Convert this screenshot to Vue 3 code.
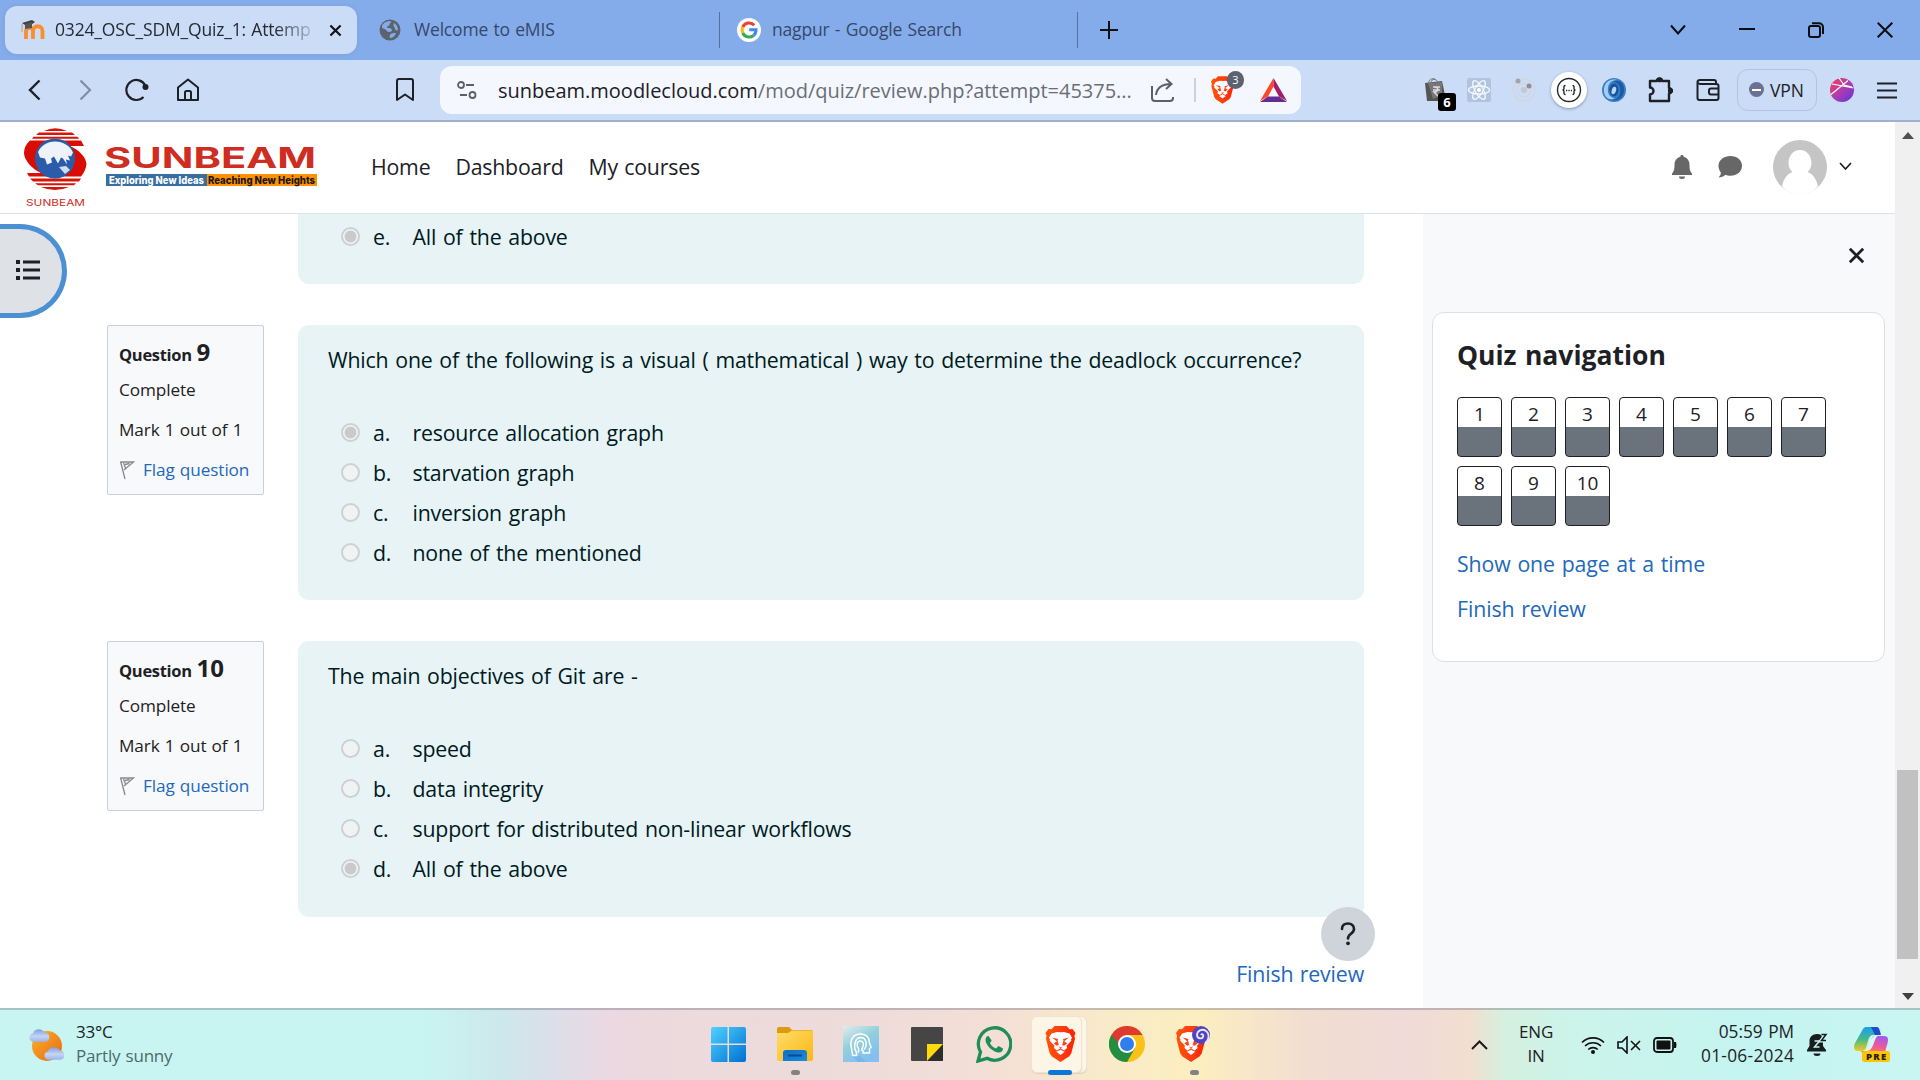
<script setup>
const navLinks = ['Home', 'Dashboard', 'My courses']
const pages = [1, 2, 3, 4, 5, 6, 7, 8, 9, 10]
const questions = [
  {
    number: 9,
    text: 'Which one of the following is a visual ( mathematical ) way to determine the deadlock occurrence?',
    chosen: 0,
    options: ['resource allocation graph', 'starvation graph', 'inversion graph', 'none of the mentioned'],
  },
  {
    number: 10,
    text: 'The main objectives of Git are -',
    chosen: 3,
    options: ['speed', 'data integrity', 'support for distributed non-linear workflows', 'All of the above'],
  },
]
const letters = ['a.', 'b.', 'c.', 'd.', 'e.']
</script>

<template>
  <div class="desktop">
    <!-- shared artwork -->
    <svg class="defs" width="0" height="0" aria-hidden="true">
      <defs>
        <linearGradient id="gLion" x1="0" y1="0" x2="1" y2="0"><stop offset="0" stop-color="#ff5500" /><stop offset=".5" stop-color="#fb3f12" /><stop offset="1" stop-color="#ff2000" /></linearGradient>
        <linearGradient id="gWin" x1="0" y1="0" x2="1" y2="1"><stop offset="0" stop-color="#4fd2ff" /><stop offset="1" stop-color="#0070d2" /></linearGradient>
        <linearGradient id="gFolder" x1="0" y1="0" x2="1" y2="1"><stop offset="0" stop-color="#ffdc6b" /><stop offset="1" stop-color="#fcb713" /></linearGradient>
        <linearGradient id="gPocket" x1="0" y1="0" x2="1" y2="1"><stop offset="0" stop-color="#0d6fc4" /><stop offset="1" stop-color="#1a8ae0" /></linearGradient>
        <linearGradient id="gHead" x1="0" y1="0" x2=".6" y2="1"><stop offset="0" stop-color="#e2ecec" /><stop offset=".5" stop-color="#92cfdb" /><stop offset="1" stop-color="#83bff0" /></linearGradient>
        <linearGradient id="gSun" x1="0" y1="0" x2="1" y2="1"><stop offset="0" stop-color="#f4b62c" /><stop offset="1" stop-color="#ee6412" /></linearGradient>
        <linearGradient id="gCloud" x1="0" y1="0" x2="0" y2="1"><stop offset="0" stop-color="#7f9ee0" /><stop offset=".55" stop-color="#c5d5f4" /><stop offset="1" stop-color="#9bb4ea" /></linearGradient>
        <linearGradient id="gLeo" x1="0" y1="0" x2="1" y2="1"><stop offset="0" stop-color="#fa3f4e" /><stop offset=".5" stop-color="#b23bb0" /><stop offset="1" stop-color="#5a35e0" /></linearGradient>
        <linearGradient id="gCopA" x1="0" y1="0" x2="0" y2="1"><stop offset="0" stop-color="#18a0ee" /><stop offset=".5" stop-color="#44b88c" /><stop offset="1" stop-color="#f0cb1c" /></linearGradient>
        <linearGradient id="gCopB" x1=".6" y1="0" x2=".3" y2="1"><stop offset="0" stop-color="#a45ae8" /><stop offset=".5" stop-color="#ee5a98" /><stop offset="1" stop-color="#ff8a50" /></linearGradient>
        <symbol id="lion" viewBox="0 0 30 36">
          <path fill="url(#gLion)" d="M9 0h12l3 3.300 3-.3 3 4-1.100 3 .6 2.700-3.700 14.500-2 3L15 36l-8.800-5.800-2-3L.5 12.700 1.100 10 0 7l3-4 3 .3z" />
          <path fill="#fff" d="M15 6.300l3.500-.3 5.500 1.500 2.700 4.500-1.200 1 .3 1.700-4.800 5 .6 2.400-3 2.300-2.500-1.500L15 22l-1.100.9-2.500 1.500-3-2.300.6-2.400-4.800-5 .3-1.700-1.200-1L6 7.500 11.500 6z" />
          <path fill="#fb4314" d="M6.500 11.500l6 1.500-.5 1.500 1.300 4.500-1.800.8-3.200-2.300 3-2.200zM23.500 11.500l-6 1.500.5 1.500-1.300 4.500 1.800.8 3.200-2.300-3-2.200zM12.500 20.500l2.500.7 2.500-.7-2.500 1.700z" />
          <path fill="#fff" d="M15 23.700l4.200 2L15 29l-4.200-3.300z" />
        </symbol>
        <symbol id="flag" viewBox="0 0 16 20"><path d="M1.500 1.500l4.500 17.500M1.500 2h13l-9.500 8M4.500 3l2 5M6 4.500l4.500-1" fill="none" stroke="#85898d" stroke-width="1.300" /></symbol>
        <symbol id="cloud" viewBox="0 0 20 13"><path d="M4 13a4 4 0 0 1-.4-7.900A6 6 0 0 1 14.500 4 4.600 4.600 0 0 1 16 13z" fill="url(#gCloud)" /></symbol>
        <symbol id="close" viewBox="0 0 14 14"><path d="M1.500 1.500l11 11M12.500 1.500l-11 11" stroke="currentColor" fill="none" stroke-width="2.300" /></symbol>
      </defs>
    </svg>

    <div class="tabstrip">
      <div class="tab active">
        <svg width="24" height="22" viewBox="0 0 24 22"><path d="M5 20v-8a3.500 3.500 0 0 1 7 0v8M12 20v-8a4.500 4.500 0 0 1 9.500 0v8" fill="none" stroke="#f98f2a" stroke-width="3.800" /><path d="M1 4l10-3 3 2-7 5z" fill="#3f3f41" /><path d="M4 5v5l7-1V3z" fill="#555" /><path d="M1 5v8" stroke="#bda084" /></svg>
        <span class="tabname fade">0324_OSC_SDM_Quiz_1: Attemp</span>
        <svg class="x" width="13" height="13"><use href="#close" /></svg>
      </div>
      <div class="tab second">
        <svg width="22" height="22" viewBox="0 0 22 22"><circle cx="11" cy="11" r="10.500" fill="#5b646e" /><path d="M5 4c3-2 5-2 7-1.500 1 1.500-2 1.500-1.500 3s-2 1-2.500 2.500 3 .5 4.500 2-1 3.500-3 3-2.500-3-5-3.500-1.500-4 .5-5.500zM15 4c2 1 4 4 4 7-1.500 1-3 0-3-1.500S13.500 7 15 4zM11 16c1-2 4-2 6-2-1 3-3 4.500-5.500 5-1-.5-1-2-.5-3z" fill="#85acea" /></svg>
        <span class="tabname">Welcome to eMIS</span>
      </div>
      <div class="tab third">
        <svg width="24" height="24" viewBox="0 0 48 48"><circle cx="24" cy="24" r="24" fill="#fff" /><g fill="none" stroke-width="6"><path d="M34.500 14.500A14 14 0 0 0 11.500 18" stroke="#ea4335" /><path d="M11.500 18a14 14 0 0 0 0 12" stroke="#fbbc05" /><path d="M11.500 30a14 14 0 0 0 21.500 5" stroke="#34a853" /><path d="M33 35a14 14 0 0 0 5-11.500H24.500" stroke="#4285f4" /></g></svg>
        <span class="tabname">nagpur - Google Search</span>
      </div>
      <svg class="plus" width="18" height="18" viewBox="0 0 18 18"><path d="M9 0v18M0 9h18" stroke="#111" stroke-width="2" /></svg>
      <div class="wincontrols">
        <svg width="16" height="12" viewBox="0 0 16 12"><path d="M1 1.500l7 8 7-8" /></svg>
        <svg width="16" height="12" viewBox="0 0 16 12"><path d="M0 5h16" /></svg>
        <svg width="16" height="16" viewBox="0 0 16 16"><rect x="1" y="4" width="11" height="11" rx="2" /><path d="M4 1.200h7a4 4 0 0 1 4 4V12" /></svg>
        <svg width="16" height="16" viewBox="0 0 16 16"><path d="M.7.7l14.600 14.600M15.300.7L.7 15.300" /></svg>
      </div>
    </div>

    <div class="toolbar">
      <div class="navicons">
        <svg width="13" height="22" viewBox="0 0 13 22"><path d="M11.500 1.500L2 11l9.500 9.500" stroke-width="2.400" /></svg>
        <svg class="dim" width="13" height="22" viewBox="0 0 13 22"><path d="M1.500 1.500L11 11l-9.500 9.500" stroke-width="2.200" /></svg>
        <svg width="24" height="24" viewBox="0 0 24 24"><path d="M18.500 19a10 10 0 1 1 1.800-11.500" stroke-width="2.200" /><circle cx="20.500" cy="9" r="3" fill="#1d2026" stroke="none" /></svg>
        <svg width="24" height="24" viewBox="0 0 24 24"><path d="M2 9.500L12 1.500l10 8V22H2z M9 22v-7.500a1.500 1.500 0 0 1 1.500-1.500h3a1.500 1.500 0 0 1 1.500 1.500V22" stroke-width="2" stroke-linejoin="round" /></svg>
      </div>
      <svg class="bookmark" width="18" height="24" viewBox="0 0 18 24"><path d="M1 3a2 2 0 0 1 2-2h12a2 2 0 0 1 2 2v19l-8-5.500L1 22z" fill="none" stroke="#1d2026" stroke-width="2" stroke-linejoin="round" /></svg>
      <div class="urlbar">
        <svg width="20" height="18" viewBox="0 0 20 18" fill="none" stroke="#5c6066" stroke-width="1.800"><circle cx="4" cy="4" r="3" /><path d="M9 4h8M3 14h7" /><circle cx="15.500" cy="14" r="3" /></svg>
        <span class="url">sunbeam.moodlecloud.com<span class="path">/mod/quiz/review.php?attempt=45375...</span></span>
        <svg class="share" width="24" height="24" viewBox="0 0 24 24" fill="none" stroke="#5c6066" stroke-width="2"><path d="M2 8v12a3 3 0 0 0 3 3h15a3 3 0 0 0 3-3v-1M6 17C7 9 12 6 21 6M16 1l5.500 5-5.500 5" /></svg>
        <i class="bar"></i>
        <span class="shield"><svg width="23" height="28"><use href="#lion" /></svg><b>3</b></span>
        <svg class="tri" width="27" height="24" viewBox="0 0 27 24"><path d="M13.500 0L0 23l8-4.500 5.500-10z" fill="#ff4724" /><path d="M13.500 0L27 23l-8-4.500-5.500-10z" fill="#a01f66" /><path d="M0 24h27l-8-5.500H8z" fill="#662d91" /></svg>
      </div>
      <div class="ext">
        <span class="bag"><svg width="22" height="24" viewBox="0 0 22 24"><path d="M1 5l17-2 3 14-5 6H3z" fill="#555" /><path d="M4 5l14-1v13l-9 4z" fill="#777" /><path d="M7 5c0-5 6-5 7 0M4 6c1-5 5-7 8-4" stroke="#777" fill="none" /><path d="M9 9h7M9 12h7M10 9c6 0 4 5 0 5l4 4" stroke="#ddd" fill="none" stroke-width="1.500" /></svg><b>6</b></span>
        <svg width="24" height="24" viewBox="0 0 24 24"><rect width="24" height="24" rx="2" fill="#b0c4e0" /><g fill="none" stroke="#f4f8ff" stroke-width="1.300"><ellipse cx="12" cy="12" rx="10.500" ry="4" /><ellipse cx="12" cy="12" rx="10.500" ry="4" transform="rotate(60 12 12)" /><ellipse cx="12" cy="12" rx="10.500" ry="4" transform="rotate(120 12 12)" /></g><circle cx="12" cy="12" r="2" fill="#fff" /></svg>
        <svg width="24" height="24" viewBox="0 0 24 24"><g fill="none" stroke="#d2d6de" stroke-width="1.300"><circle cx="12" cy="12" r="11" /><circle cx="12" cy="12" r="7" /></g><circle cx="12" cy="12" r="3" fill="#c8c8c8" /><circle cx="6" cy="3" r="2.500" fill="#a3a5a8" /><circle cx="17" cy="8" r="2.500" fill="#8d9096" /></svg>
        <span class="disc"><svg width="26" height="26" viewBox="0 0 26 26" fill="none" stroke="#23282b" stroke-width="1.400"><circle cx="13" cy="13" r="11.500" /><path d="M9.500 8.500c-2 0-1.500 2-1.500 3s-.5 1.500-1.500 1.500c1 0 1.500.5 1.500 1.500s-.5 3 1.500 3M16.500 8.500c2 0 1.500 2 1.500 3s.5 1.500 1.500 1.500c-1 0-1.500.5-1.500 1.500s.5 3-1.500 3" /><path d="M10 13.500h1.300M12.400 13.500h1.300M14.800 13.500h1.300" /></svg></span>
        <svg width="24" height="24" viewBox="0 0 24 24"><circle cx="12" cy="12" r="12" fill="#3a7fc6" /><path d="M2 14C1 6 7 0 15 2 8 2 5 7 6 14c1 4 4 6 7 6C8 23 3 20 2 14z" fill="#a5cdf0" /><path d="M22 10c1 8-5 14-13 12 7 0 10-5 9-12-1-4-4-6-7-6 5-3 10 0 11 6z" fill="#1a5ba8" /><ellipse cx="12" cy="12" rx="4.600" ry="6.500" fill="#17539c" /><ellipse cx="12" cy="12.500" rx="2.200" ry="3.800" fill="#b9d6f3" transform="rotate(15 12 12)" /></svg>
        <svg width="27" height="26" viewBox="0 0 27 26"><path d="M3 4h7a2.500 2.500 0 0 1 5 0h7v7a2.800 2.800 0 0 1 0 5.500V24H3v-6.500a3.500 3.500 0 0 0 0-7z" fill="none" stroke="#1d2026" stroke-width="2.400" stroke-linejoin="round" /><circle cx="12.500" cy="3" r="2.400" fill="#1d2026" /><circle cx="23.500" cy="13.700" r="2.600" fill="#1d2026" /></svg>
        <svg width="24" height="22" viewBox="0 0 24 22"><path d="M20 5H4a3 3 0 0 1-2.500-2c0-1 1-2 2.500-2h14a2 2 0 0 1 2 2v2a2 2 0 0 1 2.500 2v12a2 2 0 0 1-2 2H3.500a2 2 0 0 1-2-2V3M22.500 9.500H15a2 2 0 0 0-2 2v2a2 2 0 0 0 2 2h7.500" fill="none" stroke="#1d2026" stroke-width="2" /></svg>
        <span class="vpn"><i></i>VPN</span>
        <svg width="24" height="24" viewBox="0 0 24 24"><circle cx="12" cy="12" r="12" fill="url(#gLeo)" /><path d="M1 16.500L18 2.500M2 6l21.500 4M9 0l5 7 8 2" stroke="#fff" stroke-width="1.200" fill="none" /></svg>
        <svg width="20" height="17" viewBox="0 0 20 17"><path d="M0 1.500h20M0 8.500h20M0 15.500h20" stroke="#1d2026" stroke-width="2" /></svg>
      </div>
    </div>

    <div class="page">
      <div class="site">
        <header class="sitehead">
          <svg class="logo" width="300" height="88" viewBox="0 0 300 88">
            <path d="M20 9Q31 3.500 43 9zM15 10.500h33l3 2.500H12zM9.500 14.700h44l1.700 2H8z" fill="#d71408" />
            <path d="M6 18.500h51l3 5.500H46c9 4 16 11 16.500 18C62 47 60 51 57 54.500H5L3 51h14C8 47 0 38 0 31c0-5 2-9 6-12.500z" fill="#d90d04" />
            <path d="M6 56.500h51l-2 3H9zM11 61.200h41l-2 2H14zM17 65h28Q31 71 17 65z" fill="#d71408" />
            <circle cx="31" cy="36.500" r="20" fill="#2a5cab" />
            <path d="M14 30c3-6 9-10.500 17-10.500 8 0 15 4 18 11l-2 4-3-1 2 5-4-1 1 5-4-6-2-1-3 6-4-7-3 2 1 4-5 2-2-6-5-1z" fill="#eef3fa" />
            <path d="M35 45l7-1 4 4-5 4z" fill="#d0dff0" />
            <text x="2" y="83.500" font-size="9.500" class="lname thin" textLength="59" lengthAdjust="spacingAndGlyphs">SUNBEAM</text>
            <text x="80" y="45.500" font-size="28" class="lname" textLength="212" lengthAdjust="spacingAndGlyphs">SUNBEAM</text>
            <rect x="82" y="52" width="101" height="12" fill="#376d9f" /><rect x="183" y="52" width="110" height="12" fill="#fb9106" />
            <text x="85" y="61.500" font-size="10.500" class="ltag" fill="#fff" textLength="95" lengthAdjust="spacingAndGlyphs">Exploring New Ideas</text>
            <text x="184" y="61.500" font-size="10.500" class="ltag" fill="#21160a" textLength="107" lengthAdjust="spacingAndGlyphs">Reaching New Heights</text>
          </svg>
          <nav class="links"><a v-for="l in navLinks" :key="l">{{ l }}</a></nav>
          <div class="user">
            <svg width="22" height="24" viewBox="0 0 22 24" fill="#676767"><path d="M11 0a1.500 1.500 0 0 1 1.500 1.800C17 3 18.500 6.500 18.500 10c0 5 1 7 2.500 8.500V20H1v-1.500C2.500 17 3.500 15 3.500 10 3.500 6.500 5 3 9.500 1.800A1.500 1.500 0 0 1 11 0zM8 21.500h6a3 2.500 0 0 1-6 0z" /></svg>
            <svg width="24" height="22" viewBox="0 0 24 22" fill="#676767"><path d="M12.500 0C19 0 24 4 24 9.700s-5 10-11.500 10c-2 0-3.500-.3-5-1C5.500 20.500 3 21.500.500 21.500c1.500-1.500 2.500-3 2.300-5C1.300 14.500.5 12 .5 9.700.5 4 6 0 12.500 0z" /></svg>
            <svg class="avatar" width="54" height="54" viewBox="0 0 54 54"><circle cx="27" cy="27" r="27" fill="#c5c5c5" /><path d="M15.500 23c0-7 4.500-13 11.500-13s11.500 6 11.500 13c0 4-1.500 7-4 9 6 2 9 8 10.500 14-8 11-28 11-36 0 1.500-6 4.500-12 10.500-14-2.500-2-4-5-4-9z" fill="#fff" /></svg>
            <svg width="13" height="9" viewBox="0 0 13 9"><path d="M1 1l5.500 6L12 1" stroke="#1d2125" stroke-width="1.700" fill="none" /></svg>
          </div>
        </header>

        <div class="columns">
          <div class="indexbtn"><svg width="24" height="20" viewBox="0 0 24 20" fill="#1d2125"><path d="M0 0h4v4H0zM0 8h4v4H0zM0 16h4v4H0zM7 .5h17v3H7zM7 8.500h17v3H7zM7 16.500h17v3H7z" /></svg></div>
          <main class="quiz">
            <div class="question tail">
              <div class="card">
                <div class="option"><i class="radio on"></i><span class="letter">{{ letters[4] }}</span><span>All of the above</span></div>
              </div>
            </div>
            <div v-for="q in questions" :key="q.number" class="question">
              <aside class="info">
                <p class="qno">Question <b>{{ q.number }}</b></p>
                <p>Complete</p>
                <p>Mark 1 out of 1</p>
                <p class="flag"><svg width="16" height="20"><use href="#flag" /></svg><a>Flag question</a></p>
              </aside>
              <div class="card">
                <p class="qtext">{{ q.text }}</p>
                <div v-for="(o, i) in q.options" :key="o" class="option">
                  <i class="radio" :class="{ on: i === q.chosen }"></i><span class="letter">{{ letters[i] }}</span><span>{{ o }}</span>
                </div>
              </div>
            </div>
            <div class="finish"><a>Finish review</a></div>
            <div class="help"><svg width="16" height="24" viewBox="0 0 16 24"><path d="M2 7c0-4 2.500-5.500 6-5.500s6 2 6 5.500c0 5-6 4.500-6 9.500" fill="none" stroke="#1d2125" stroke-width="2.600" stroke-linecap="round" /><circle cx="8" cy="21.300" r="1.900" fill="#1d2125" /></svg></div>
          </main>
          <section class="drawer">
            <svg class="shut" width="17" height="17"><use href="#close" /></svg>
            <div class="block">
              <h2>Quiz navigation</h2>
              <div class="pages"><span v-for="p in pages" :key="p">{{ p }}</span></div>
              <a>Show one page at a time</a>
              <a>Finish review</a>
            </div>
          </section>
        </div>
      </div>
      <div class="scrollbar">
        <i class="up"></i><i class="thumb"></i><i class="down"></i>
      </div>
    </div>

    <footer class="taskbar">
      <div class="weather">
        <svg width="36" height="34" viewBox="0 0 36 34"><circle cx="18" cy="18" r="15" fill="url(#gSun)" /><use href="#cloud" x="0" y="0" width="21" height="14" /><use href="#cloud" x="15" y="18" width="21" height="14" /></svg>
        <div><span>33°C</span><span class="sub">Partly sunny</span></div>
      </div>
      <div class="apps">
        <span class="app"><svg width="35" height="35" viewBox="0 0 35 35"><path d="M0 2a2 2 0 0 1 2-2h14.500v16.500H0zM18 0h15a2 2 0 0 1 2 2v14.500H18zM0 18h16.500v17H2a2 2 0 0 1-2-2zM18 18h17v15a2 2 0 0 1-2 2H18z" fill="url(#gWin)" /></svg></span>
        <span class="app"><svg width="36" height="34" viewBox="0 0 36 34"><path d="M0 2a2 2 0 0 1 2-2h10l3 3h19a2 2 0 0 1 2 2v6H0z" fill="#dc9b0c" /><path d="M0 6h11l4-2.500h21V32a2 2 0 0 1-2 2H2a2 2 0 0 1-2-2z" fill="url(#gFolder)" /><path d="M6 34v-8a3 3 0 0 1 3-3h18a3 3 0 0 1 3 3v8z" fill="url(#gPocket)" /><path d="M11 28.500h14" stroke="#0a4a90" stroke-width="2" /></svg><i class="dot"></i></span>
        <span class="app"><svg width="36" height="36" viewBox="0 0 36 36"><rect width="36" height="36" fill="url(#gHead)" /><path d="M9 30h8l6 6H15z" fill="#6faeea" opacity=".6" /><g fill="none" stroke="#fff" stroke-width="1.500"><path d="M9.500 29.500h4v-3.500M9.500 29.500V28l-1.500-8c-1-7 3-12 9-12 6.500 0 9.500 4 9.500 9l1.500 4.500-1.500 1V27h-6.500v-3" /><path d="M13.500 26c-3-3.500-2.500-14 4-14.500 6.500 0 7 8.500 3.500 12M15.500 26.500v-4c-2.500-3-1.500-7.500 1.800-7.500s4.200 4.500 1.700 7.500v2.500" /></g></svg></span>
        <span class="app"><svg width="32" height="34" viewBox="0 0 32 34"><rect width="32" height="34" rx="1" fill="#454545" /><path d="M16 34V17h16z" fill="#2d2d2d" /><path d="M32 17v16a1 1 0 0 1-1 1H16z" fill="#2d2d2d" /><path d="M16 34V17h16z" fill="#ffd90b" /></svg></span>
        <span class="app"><svg width="36" height="38" viewBox="0 0 36 38"><path d="M2 36l2.500-9A16.200 16.200 0 1 1 11 33.300z" fill="none" stroke="#1e8d5a" stroke-width="3.300" /><path d="M12.500 11c-2 0-3 2-3 4 0 5 7.500 12.500 13.500 12.500 2 0 4-1.500 4-4l-4.500-2.500-2.500 2.500c-3-1-5-3-6-5.500l1.700-2.500z" fill="#1e8d5a" /></svg></span>
        <span class="app"><span class="tile back"></span><span class="tile"></span><svg class="front" width="31" height="36"><use href="#lion" /></svg><i class="dot blue"></i></span>
        <span class="app"><svg width="36" height="36" viewBox="0 0 36 36"><circle cx="18" cy="18" r="18" fill="#fbc116" /><path d="M2.400 9A18 18 0 0 1 33.600 9H18z" fill="#de3b2e" /><path d="M2.400 9A18 18 0 0 0 18 36l7.800-13.500L18 18z" fill="#218e41" /><path d="M2.400 9L10.200 22.500 18 18V9z" fill="#de3b2e" /><path d="M2.400 9l7.800 13.500L18 27z" fill="#218e41" /><circle cx="18" cy="18" r="9" fill="#fff" /><circle cx="18" cy="18" r="7" fill="#2f7dee" /></svg></span>
        <span class="app"><svg class="lion2" width="36" height="36" viewBox="0 0 36 36"><use href="#lion" width="30" height="36" /><circle cx="25" cy="9" r="9" fill="#5145bf" /><path d="M25 9c1-2 3 0 2 2s-6 2-6-2 5-7 9-4 3 10-1 12" fill="none" stroke="#e9e5ff" stroke-width="1.800" /></svg><i class="dot"></i></span>
      </div>
      <div class="tray">
        <svg class="chev" width="17" height="10" viewBox="0 0 17 10"><path d="M1 9l7.500-7.500L16 9" fill="none" stroke="#1b1b1b" stroke-width="2" /></svg>
        <span class="lang">ENG<br />IN</span>
        <svg class="wifi" width="24" height="18" viewBox="0 0 24 18"><g fill="none" stroke="#111" stroke-width="1.600"><path d="M1 6.500a15.500 15.500 0 0 1 22 0M4 10a11.500 11.500 0 0 1 16 0M7.200 13.500a7 7 0 0 1 9.600 0" /></g><circle cx="12" cy="16" r="2" fill="#111" /></svg>
        <svg class="spk" width="24" height="18" viewBox="0 0 24 18"><path d="M1 6h4l5-5v16l-5-5H1zM14 5l9 9M23 5l-9 9" fill="none" stroke="#111" stroke-width="1.600" /></svg>
        <svg class="bat" width="24" height="16" viewBox="0 0 24 16"><rect x="1" y="1" width="19" height="14" rx="3" fill="none" stroke="#111" stroke-width="1.800" /><rect x="3.500" y="3.500" width="14" height="9" rx="1" fill="#111" /><path d="M21 5h2q1 3 0 6h-2z" fill="#111" /></svg>
        <span class="clock">05:59 PM<br /><span class="date">01-06-2024</span></span>
        <svg class="bell" width="22" height="24" viewBox="0 0 22 24"><path d="M10 1c3 0 5 1 6 3v9l3 4v1.500H0V17l2.500-4V8c0-4 3-7 7.500-7zM6.500 20.500h7a3.500 2.500 0 0 1-7 0z" fill="#181d1d" /><path d="M7.500 8h5l-5 6h5" stroke="#c6f5f2" stroke-width="1.500" fill="none" /><path d="M14.500 1.500H19l-4.500 6H19" stroke="#c6f5f2" stroke-width="4" fill="none" /><path d="M14.500 1.500H19l-4.500 6H19" stroke="#181d1d" stroke-width="1.500" fill="none" /></svg>
        <svg class="copilot" width="36" height="36" viewBox="0 0 36 36"><path d="M9 2c1-1.500 2-2 4-2h9c2 0 3 2 4 8h-7c-3 0-4 3-5 6l-2 7c-1 2-2 3-4 3H4c-4 0-5-3-3-8z" fill="url(#gCopA)" /><path d="M17 0h6c2 0 3 4 4 8h-6z" fill="#1c49cf" /><path d="M21 9h9c4 0 5 3 3 9l-2 7c-1 2-3 3-5 3H12c-3 0-4-2-5-4h4c3 0 4-3 5-7 1-3 2-8 5-8z" fill="url(#gCopB)" /><path d="M21 9h3c-4 1-4 15-11 15h-3c6-1 5-14 11-15z" fill="#ddf4f0" /><rect x="8" y="24" width="28" height="11" rx="2.500" fill="#fbc404" /><text x="12" y="33" font-size="9.500" class="pre" textLength="20">PRE</text></svg>
      </div>
    </footer>
  </div>
</template>

<style>
body { margin: 0; overflow: hidden; }
</style>

<style scoped>
.desktop { width: 1920px; height: 1080px; display: flex; flex-direction: column; overflow: hidden; font-family: "Open Sans", "Noto Sans", sans-serif; color: #1d2125; background: #fff; }
.desktop svg { display: block; flex: none; }
.defs { position: absolute; }
p, h2 { margin: 0; }
i { font-style: normal; }
a { color: #2268bb; }

.tabstrip { flex: none; height: 60px; display: flex; align-items: center; background: #85acea; box-sizing: border-box; padding-left: 5px; }
.tab { display: flex; align-items: center; box-sizing: border-box; height: 36px; font-size: 17.500px; letter-spacing: -.18px; word-spacing: 1px; white-space: nowrap; color: #35486b; }
.tabname { margin-bottom: 2px; }
.tab.active { width: 352px; height: 48px; padding-left: 16px; border-radius: 12px; background: #cbdcf6; color: #262b33; box-shadow: 0 0 4px rgba(60, 90, 150, .15); }
.tab.active .tabname { margin-left: 10px; width: 256px; }
.fade { -webkit-mask-image: linear-gradient(90deg, #000 86%, rgba(0, 0, 0, .2)); }
.tab.active .x { margin-left: 18px; color: #111; }
.tab.second { width: 363px; padding-left: 22px; border-right: 1px solid #57719f; }
.tab.second .tabname { margin-left: 13px; }
.tab.third { width: 358px; padding-left: 17px; border-right: 1px solid #57719f; }
.tab.third .tabname { margin-left: 11px; }
.plus { margin-left: 22px; }
.wincontrols { margin-left: auto; margin-right: 27px; display: flex; align-items: center; gap: 53px; }
.wincontrols svg { fill: none; stroke: #0b0d12; stroke-width: 2; }

.toolbar { flex: none; height: 62px; box-sizing: border-box; border-bottom: 2px solid #a0b1cc; background: #cbdcf6; display: flex; align-items: center; }
.navicons { display: flex; align-items: center; margin-left: 28px; }
.navicons svg { fill: none; stroke: #1d2026; }
.navicons svg:nth-child(2) { margin-left: 38px; }
.navicons svg:nth-child(3) { margin-left: 33px; }
.navicons svg:nth-child(4) { margin-left: 27px; }
.navicons .dim { stroke: #7f8da8; }
.bookmark { margin-left: 196px; }
.urlbar { margin-left: 26px; width: 861px; height: 48px; box-sizing: border-box; padding-left: 17px; border-radius: 12px; background: #f4f7fd; display: flex; align-items: center; }
.url { margin-left: 21px; width: 634px; font-size: 20px; letter-spacing: -.01px; color: #1d2026; white-space: nowrap; }
.path { color: #6a6e76; }
.share { margin-left: 18px; }
.bar { margin-left: 20px; width: 2px; height: 24px; background: #cdd1d8; }
.shield { position: relative; margin-left: 15px; }
.shield b { position: absolute; left: 16px; top: -5px; width: 17px; height: 18px; border-radius: 9px; background: #5d6270; color: #fff; font-size: 11px; font-weight: 400; line-height: 18px; text-align: center; }
.tri { margin-left: 26px; }
.ext { display: flex; align-items: center; margin-left: auto; margin-right: 23px; }
.ext > :nth-child(2) { margin-left: 21px; }
.ext > :nth-child(3) { margin-left: 21px; }
.ext > :nth-child(4) { margin-left: 15px; }
.ext > :nth-child(5) { margin-left: 15px; }
.ext > :nth-child(6) { margin-left: 21px; }
.ext > :nth-child(7) { margin-left: 22px; }
.ext > :nth-child(8) { margin-left: 17px; }
.ext > :nth-child(9) { margin-left: 13px; }
.ext > :nth-child(10) { margin-left: 23px; }
.bag { position: relative; }
.bag b { position: absolute; left: 14px; top: 15px; width: 18px; height: 18px; border-radius: 3px; background: #000; color: #fff; font-size: 13px; line-height: 19px; text-align: center; }
.disc { width: 36px; height: 36px; border-radius: 50%; background: #fff; box-shadow: 0 1px 3px rgba(40, 60, 100, .45); display: flex; align-items: center; justify-content: center; }
.vpn { width: 80px; height: 42px; box-sizing: border-box; padding: 0 0 1px 11px; border: 1px solid #b3c4e2; border-radius: 11px; display: flex; align-items: center; font-size: 17.500px; letter-spacing: -.1px; }
.vpn i { width: 15px; height: 15px; border-radius: 50%; margin-right: 6px; background: linear-gradient(#fff, #fff) center / 9px 2px no-repeat #6b7192; }

.page { height: 886px; flex: none; display: flex; }
.site { width: 1895px; display: flex; flex-direction: column; }
.sitehead { height: 92px; flex: none; box-sizing: border-box; border-bottom: 1px solid #dee2e6; display: flex; align-items: center; }
.sitehead .logo { margin-left: 24px; align-self: flex-start; overflow: visible; }
.lname { font-family: Inter, "Liberation Sans", sans-serif; font-weight: 700; fill: #d02d22; }
.lname.thin { font-weight: 400; }
.ltag { font-family: Inter, "Liberation Sans", sans-serif; font-weight: 800; }
.links { display: flex; gap: 25px; margin: 0 0 2px 47px; font-size: 21.300px; letter-spacing: -.2px; word-spacing: 1px; }
.links a { color: #1d2125; }
.user { margin-left: auto; margin-right: 43px; margin-bottom: 2px; display: flex; align-items: center; }
.user svg:nth-child(2) { margin-left: 25px; }
.user svg:nth-child(3) { margin-left: 31px; }
.user svg:nth-child(4) { margin-left: 12px; }

.columns { position: relative; height: 794px; display: flex; }
.indexbtn { position: absolute; left: 0; top: 10px; width: 67px; height: 94px; box-sizing: border-box; border: 5px solid #4a90d2; border-left: 0; border-radius: 0 47px 47px 0; background: #dee2e6; display: flex; align-items: center; padding: 0 0 2px 16px; }
.quiz { position: relative; width: 1257px; margin-left: 107px; display: flex; flex-direction: column; }
.question { display: flex; justify-content: space-between; height: 275px; margin-bottom: 41px; }
.question:nth-child(3) { height: 276px; }
.question.tail { height: 70px; justify-content: flex-end; }
.card { width: 1066px; box-sizing: border-box; border-radius: 11px; background: #e7f3f5; font-size: 21.300px; color: #001a1e; letter-spacing: -.19px; word-spacing: 1.500px; }
.tail .card { border-radius: 0 0 11px 11px; padding-top: 2px; }
.qtext { height: 87px; padding: 19px 0 0 30px; box-sizing: border-box; line-height: 32px; white-space: nowrap; }
.option { height: 40px; display: flex; align-items: center; padding-left: 43px; }
.radio { width: 19px; height: 19px; box-sizing: border-box; border: 2px solid #cdd1d3; border-radius: 50%; background: #eff3f4; margin-right: 13px; }
.radio.on { background: radial-gradient(circle, #cacacc 0 5.500px, #eff3f4 6.300px); }
.letter { width: 39.500px; }
.info { width: 157px; height: 170px; box-sizing: border-box; border: 1px solid #cad0d7; border-radius: 2px; background: #f8f9fa; padding: 6px 0 0 11px; font-size: 17.200px; letter-spacing: -.1px; word-spacing: .8px; }
.info p { height: 40px; line-height: 40px; white-space: nowrap; }
.info .qno { font-weight: 700; height: 38px; font-size: 16.500px; letter-spacing: -.3px; }
.qno b { font-size: 24px; font-weight: 700; margin-left: 0; letter-spacing: 0; }
.info .flag { display: flex; align-items: center; gap: 8px; }
.finish { text-align: right; font-size: 21.300px; letter-spacing: -.15px; word-spacing: 1px; line-height: 32px; }
.help { position: absolute; left: 1214px; top: 693px; width: 54px; height: 54px; border-radius: 50%; background: #ced4da; display: flex; align-items: center; justify-content: center; }
.drawer { width: 472px; margin-left: 59px; background: #f8f9fb; display: flex; flex-direction: column; }
.shut { align-self: flex-end; margin: 33px 30px 48px 0; }
.block { width: 453px; height: 350px; box-sizing: border-box; margin-left: 9px; padding: 24px 0 0 24px; border: 1px solid #dfdfdf; border-radius: 12px; background: #fff; display: flex; flex-direction: column; }
h2 { font-size: 26.500px; line-height: 36px; letter-spacing: 0; word-spacing: 1.500px; }
.pages { display: flex; flex-wrap: wrap; gap: 9px; margin: 24px 0 20px; width: 380px; }
.pages span { width: 45px; height: 60px; box-sizing: border-box; border: 1px solid #1d2125; border-radius: 4px; background: linear-gradient(#fff 0 29px, #6a737b 29px); text-align: center; font-size: 19px; line-height: 32px; }
.block > a { font-size: 21.300px; line-height: 45px; letter-spacing: -.1px; word-spacing: 1.300px; }
.block .pages + a { margin-top: -5px; }
.scrollbar { width: 25px; background: #f0f0f0; display: flex; flex-direction: column; align-items: center; }
.up, .down { border: 6px solid transparent; width: 0; height: 0; }
.up { border-top: 0; border-bottom: 7px solid #505050; margin-top: 10px; }
.down { border-bottom: 0; border-top: 7px solid #404040; margin-top: 34px; }
.thumb { width: 21px; height: 189px; margin-top: 631px; background: #c1c1c1; }

.taskbar { height: 72px; flex: none; box-sizing: border-box; border-top: 2px solid rgba(90, 90, 110, .32); display: flex; align-items: center; background: linear-gradient(90deg, #c8f5f1 0, #c8f5f1 420px, #cde8ec 500px, #dcdfea 555px, #ecd8e0 610px, #ecdadd 680px, #eedcda 860px, #f4dfd6 1000px, #f9eaca 1100px, #fbeebf 1200px, #f8e7c8 1245px, #f1ddd1 1310px, #f0dbd8 1410px, #f1dfd0 1470px, #d5f0e0 1505px, #ccf4ea 1570px, #c4f4f1 1750px, #caf6f2 1920px); background-origin: border-box; font-size: 17px; }
.weather { width: 666px; display: flex; align-items: center; gap: 11px; padding-left: 29px; letter-spacing: -.2px; word-spacing: 1px; }
.weather div { display: flex; flex-direction: column; line-height: 24px; margin-bottom: 2px; }
.sub { color: #4d6a6b; }
.apps { display: flex; }
.app { position: relative; width: 66.400px; height: 70px; display: flex; align-items: center; justify-content: center; }
.app > svg { margin-bottom: 2px; }
.front { position: relative; }
.tile { position: absolute; left: 4px; top: 6px; width: 51px; height: 57px; border: 1px solid #efe4d3; border-radius: 6px; background: #fdf5e6; box-shadow: 0 1px 1px #e2d3bd; box-sizing: border-box; }
.tile.back { left: 9px; }
.lion2 { margin-left: 3px; }
.dot { position: absolute; bottom: 5px; left: 30px; width: 9px; height: 5px; border-radius: 3px; background: #868080; }
.dot.blue { left: 21px; width: 24px; background: #0b78d6; }
.tray { margin-left: 245px; display: flex; align-items: center; line-height: 24px; letter-spacing: -.2px; }
.lang { width: 50px; margin: 0 0 2px 23px; text-align: center; }
.wifi { margin-left: 20px; }
.spk { margin-left: 12px; }
.bat { margin-left: 12px; }
.clock { width: 104px; margin: 0 0 2px 13px; text-align: right; white-space: nowrap; letter-spacing: 0; word-spacing: 1px; font-size: 17.300px; }
.date { letter-spacing: .3px; }
.bell { margin-left: 13px; }
.copilot { margin-left: 25px; }
.pre { font-weight: 800; fill: #2a2100; }
</style>
